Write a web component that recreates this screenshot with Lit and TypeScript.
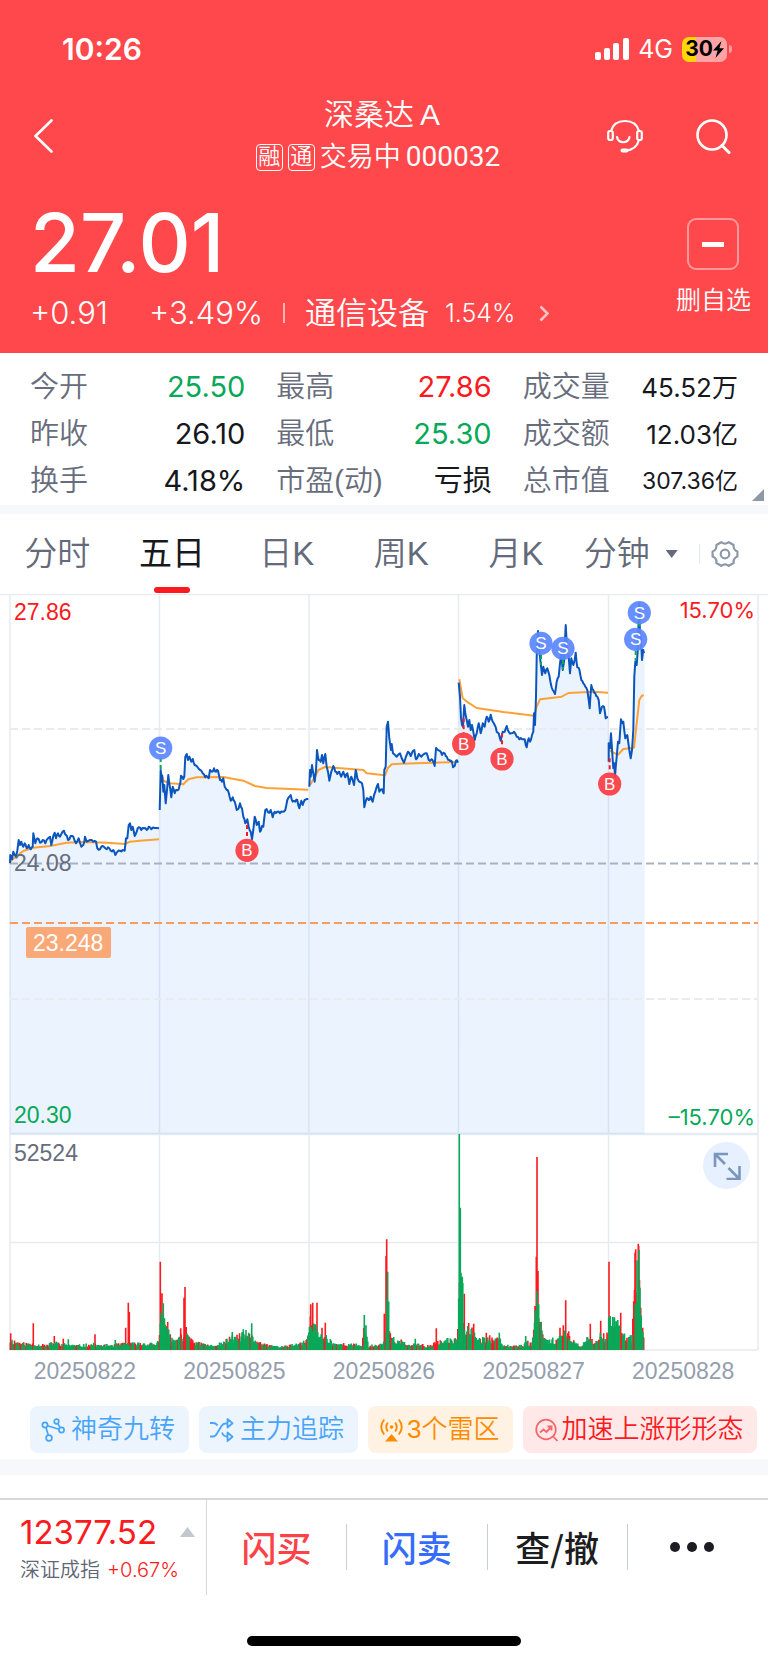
import { LitElement, html, svg, css } from "lit";
import { customElement, state } from "lit/decorators.js";

type Point = [number, number];

const UNIT = 3; // chart samples are stored in thirds of a pixel
const WIDTH = 768;
const PRICE_HEIGHT = 540;
const VOLUME_HEIGHT = 217;
const DAY_LINES = [10, 159.5, 309, 458.5, 608.5, 758];

const parse = (text: string, dx = 0): Point[] =>
  text
    .trim()
    .split(/\s+/)
    .map((pair) => {
      const [x, y] = pair.split(",").map(Number);
      return [x + dx, y] as Point;
    });

const random = (seed: number) => () => {
  seed = (seed * 1664525 + 1013904223) % 4294967296;
  return seed / 4294967296;
};

const PRICES: Point[][] = [
  parse(`30,820 31,795 36,808 40,785 44,795 48,800 52,782 56,750 60,765 64,755 70,770 74,760 80,775 86,765 92,778 98,770
    100,730 106,760 112,745 120,758 128,750 136,760 144,745 150,740 154,765 160,738 164,728 168,745 174,730 180,740
    186,728 192,722 198,735 204,750 212,738 220,740 228,760 236,745 244,770 250,765 255,740 260,755 270,750 280,755
    288,755 292,775 300,778 308,768 316,775 324,772 332,782 340,780 346,795 352,785 360,782 368,780 374,782 378,745
    382,745 386,705 390,700 394,720 398,710 404,738 410,725 416,712 424,720 432,715 440,720 446,710 454,718 464,714 477,715`),
  parse(`479,660 482,540 485,575 487,557 490,605 493,585 497,640 501,600 505,555 508,580 514,622 518,590 524,610 530,600
    536,598 541,580 543,557 550,567 553,560 556,500 560,492 564,510 568,500 574,515 578,507 584,525 592,530 600,540
    608,550 616,562 622,560 626,565 630,540 636,545 642,535 648,545 654,542 660,570 666,575 670,565 674,590 680,600
    686,608 692,632 698,622 704,635 710,660 716,655 720,640 726,655 730,680 736,700 742,688 746,710 752,725 756,748
    760,720 764,680 770,705 776,695 780,725 786,708 790,710 796,660 800,657 808,668 812,660 818,682 824,665 832,665
    840,670 848,665 856,660 862,630 866,622 872,615 878,635 886,635 892,630 898,655 904,632 908,645 914,630 925,627`),
  parse(`928,590 930,540 932,560 936,525 940,550 944,575 948,540 951,480 956,510 962,515 966,495 970,520 976,492 980,530
    984,545 988,572 994,545 1000,528 1006,545 1012,552 1018,545 1024,560 1030,545 1036,562 1042,550 1048,582 1054,560
    1062,585 1067,540 1072,565 1078,575 1086,580 1090,600 1093,652 1100,625 1106,630 1112,620 1118,635 1126,605
    1134,582 1138,605 1146,598 1151,610 1153,540 1157,530 1160,410 1164,395 1168,445 1173,480 1175,462 1179,490
    1190,500 1200,490 1212,518 1224,485 1232,498 1243,480 1248,508 1256,492 1264,500 1272,492 1280,490 1286,510
    1294,508 1300,515 1304,528 1308,474 1318,482 1326,495 1334,490 1340,500 1348,510 1354,512 1359,532 1364,528 1368,512 1374,518`),
  parse(`236,278 240,320 243,385 246,405 249,410 251,370 253,345 256,370 260,390 264,410 268,390 272,420 276,405 280,425
    284,450 290,430 296,400 302,430 308,400 314,410 320,380 326,395 332,374 338,395 344,405 350,425 356,430 362,452
    368,425 374,425 380,408 386,425 394,430 402,425 410,440 418,448 426,448 434,448 440,472 446,445 450,455 456,435
    460,425 462,370 465,405 468,320 470,200 474,123 478,180 482,220 486,255 490,230 496,250 502,235 508,255 512,280
    518,300 525,312 530,275 536,260 540,220 544,190 548,240 552,215 557,105 562,190 566,200 570,250 574,205 580,225
    584,210 587,188 592,232 598,238 604,270 610,280 616,290 622,300 626,330 629,355 634,285 640,300 646,310 652,320
    656,330 660,370 666,350 672,350 677,385 684,382`, 1140),
  parse(`686,515 686,460 690,475 693,430 697,490 700,535 703,520 705,560 710,500 714,455 718,460 720,430 723,388 728,400
    730,395 736,445 742,435 748,480 752,505 756,480 760,420 763,260 766,215 770,225 774,170 777,40 780,130 783,150
    786,210 790,180 792,190`, 1140),
];

const AVERAGES: Point[][] = [
  parse(`30,815 50,798 70,783 100,773 150,768 200,758 250,756 320,758 375,762 390,755 420,752 477,748`),
  parse(`482,545 490,572 510,580 550,583 565,568 590,562 670,561 730,572 765,588 800,594 925,599`),
  parse(`930,585 945,560 955,540 975,531 1090,540 1100,550 1155,556 1163,535 1175,523 1200,521 1372,516`),
  parse(`238,268 248,325 265,338 290,354 370,366 462,377 470,350 480,328 545,320 565,309 640,305 684,308`, 1140),
  parse(`688,480 700,488 714,494 730,477 762,473 770,400 778,330 785,318 791,315`, 1140),
];

const toLocal = ([x, y]: Point): Point => [x / UNIT, y / UNIT - 4];

// Adds the tick-by-tick flicker between the main turning points.
const flicker = (points: Point[], next: () => number): Point[] =>
  points.flatMap((p, i) => {
    const q = points[i + 1];
    if (!q || q[0] - p[0] < 5) return [p];
    return [p, [(p[0] + q[0]) / 2, (p[1] + q[1]) / 2 + (next() - 0.5) * 9] as Point];
  });

const linePath = (points: Point[]) =>
  "M" + points.map((p) => toLocal(p).map((n) => n.toFixed(1)).join(" ")).join("L");

interface Marker {
  kind: "S" | "B";
  x: number;
  y: number;
  from: number;
  to: number;
}

const MARKERS: Marker[] = [
  { kind: "S", x: 482, y: 474, from: 504, to: 540 },
  { kind: "B", x: 741, y: 781, from: 705, to: 745 },
  { kind: "B", x: 1391, y: 462, from: 385, to: 430 },
  { kind: "B", x: 1506, y: 507, from: 430, to: 470 },
  { kind: "S", x: 1623, y: 160, from: 195, to: 225 },
  { kind: "S", x: 1689, y: 175, from: 210, to: 240 },
  { kind: "B", x: 1829, y: 582, from: 505, to: 545 },
  { kind: "S", x: 1907, y: 148, from: 183, to: 213 },
  { kind: "S", x: 1918, y: 68, from: 98, to: 112 },
];

// Typical bar height along the time axis.
const ENVELOPE: Point[] = [
  ...parse(`30,36 60,22 100,20 140,15 160,26 190,20 230,15 280,20 300,15 350,18 385,22 420,22 470,22 478,40 484,110 495,95
    510,50 530,28 545,45 560,70 570,45 590,24 640,14 670,24 690,40 740,52 760,40 790,18 840,11 900,20 920,30 930,100
    945,75 965,45 980,45 1000,22 1060,18 1086,18 1092,70 1099,60 1105,14 1150,20 1158,80 1162,200 1170,70 1185,25`),
  ...parse(`65,30 80,18 110,18 150,14 170,25 200,32 232,40 237,300 243,240 248,210 255,80 262,80 280,84 292,38 320,36 360,34 370,14
    430,16 440,30 455,18 465,100 471,250 478,130 488,60 500,35 530,34 555,55 580,28 600,14 625,42 645,24 680,54 690,130
    710,100 725,55 745,36 756,44 762,190 770,240 776,290 782,120 790,50 793,20`, 1140),
];

const RISE = parse(`32,642 100,612 163,650 190,658 285,645 377,625 385,550 388,578 481,427 486,522 503,608 542,627 552,535
  555,503 932,555 938,550 951,550 966,625 976,610 1153,583 1158,410 1160,360 1309,627 1393,523 1459,640 1469,648 1605,560 1609,412
  1611,113 1614,455 1680,625 1690,618 1697,543 1706,636 1771,613 1802,604 1827,427 1862,580 1905,400 1907,390 1915,373
  1922,565 1928,625`);
const FALL = parse(`205,660 346,662 490,552 755,612 730,630 738,632 697,638 1093,587 1098,618 1163,457 1378,42 1381,265
  1383,460 1387,472 1246,658 1498,640 1577,650 1616,555 1801,640 1917,392 1920,505`);

const envelopeAt = (x: number) => {
  const i = ENVELOPE.findIndex((p) => p[0] >= x);
  if (i <= 0) return ENVELOPE[0][1];
  const [a, b] = [ENVELOPE[i - 1], ENVELOPE[i]];
  return a[1] + ((b[1] - a[1]) * (x - a[0])) / (b[0] - a[0] || 1);
};

const bar = (x: number, height: number) =>
  `M${(x / UNIT).toFixed(1)} ${VOLUME_HEIGHT - 1}v${(-height / UNIT).toFixed(1)}`;

const buildVolume = () => {
  const next = random(11);
  let up = "";
  let down = "";
  for (let x = 31; x < 1933; x += 2.5) {
    const height = Math.max(7, envelopeAt(x) * (0.5 + next() * 0.6));
    if (next() < 0.42) up += bar(x, height);
    else down += bar(x, height);
  }
  for (const [x, y] of RISE) up += bar(x, 692 - y);
  const peaks = FALL.map(([x, y]) => bar(x, 692 - y)).join("");
  return { up, down: down + peaks };
};

const VOLUME = buildVolume();
const jitter = random(5);
const PRICE_LINES = PRICES.map((session) => flicker(session, jitter));

@customElement("stock-header")
export class StockHeader extends LitElement {
  static styles = css`
    :host {
      display: block;
      background: #ff484b;
      color: #fff;
    }
    button,
    a {
      font: inherit;
      color: inherit;
      background: none;
      border: 0;
      padding: 0;
      text-decoration: none;
      cursor: pointer;
    }
    svg {
      display: block;
    }
    .status {
      box-sizing: border-box;
      display: flex;
      justify-content: space-between;
      align-items: center;
      height: 94px;
      padding: 4px 36px 0 62px;
      font-family: Inter, "Liberation Sans", sans-serif;
    }
    .time {
      font-size: 30px;
      font-weight: 600;
    }
    .signals {
      display: flex;
      align-items: center;
      gap: 9px;
    }
    .network {
      font-size: 25px;
      font-weight: 400;
    }
    .battery {
      display: flex;
      align-items: center;
      gap: 2px;
    }
    .level {
      display: flex;
      align-items: center;
      justify-content: center;
      width: 45px;
      height: 25px;
      border-radius: 7px;
      background: linear-gradient(90deg, #ffd60a 30%, #ffa4a5 30%);
      color: #000;
      font-size: 21px;
      font-weight: 700;
    }
    .tip {
      width: 3px;
      height: 8px;
      border-radius: 0 4px 4px 0;
      background: #ff9a9c;
    }
    .nav {
      display: grid;
      grid-template-columns: 1fr auto 1fr;
      align-items: center;
      height: 84px;
      padding: 0 37px 0 33px;
    }
    .title {
      text-align: center;
    }
    h1 {
      display: flex;
      justify-content: center;
      gap: 6px;
      margin: 0;
      font-size: 30px;
      line-height: 42px;
      font-weight: inherit;
    }
    .code {
      display: flex;
      align-items: center;
      justify-content: center;
      gap: 5px;
      font-size: 27px;
      line-height: 42px;
      padding-right: 8px;
    }
    .tag {
      box-sizing: border-box;
      width: 27px;
      height: 27px;
      border: 1px solid #fff;
      border-radius: 4px;
      font-size: 22px;
      line-height: 24px;
      text-align: center;
    }
    .digits {
      font-family: Roboto, "Liberation Sans", sans-serif;
      font-size: 28px;
      font-weight: 400;
    }
    .tools {
      display: flex;
      justify-content: flex-end;
      gap: 53px;
    }
    .quote {
      display: flex;
      justify-content: space-between;
      padding: 23px 17px 12px 30px;
    }
    .price {
      font-family: Inter, "Liberation Sans", sans-serif;
      font-size: 81px;
      line-height: 84px;
      font-weight: 500;
    }
    .change {
      display: flex;
      align-items: center;
      height: 56px;
      font-family: Inter, "Noto Sans CJK SC", sans-serif;
      font-size: 31px;
    }
    .change .percent {
      margin-left: 41px;
    }
    .rule {
      width: 2px;
      height: 20px;
      margin: 0 20px;
      background: #ffb3b4;
    }
    .sector {
      display: flex;
      align-items: center;
    }
    .small {
      font-size: 25px;
      margin: 0 24px 0 16px;
    }
    .watch {
      display: flex;
      flex-direction: column;
      align-items: center;
      gap: 10px;
      align-self: flex-start;
      padding-top: 17px;
      font-size: 25px;
      line-height: 40px;
    }
    .box {
      box-sizing: border-box;
      display: grid;
      place-items: center;
      width: 52px;
      height: 52px;
      border: 2px solid #ff9a9c;
      border-radius: 9px;
    }
    .minus {
      width: 22px;
      height: 5px;
      background: #fff;
    }
  `;

  render() {
    return html`
      <div class="status">
        <span class="time">10:26</span>
        <div class="signals">
          <svg width="34" height="22" viewBox="0 0 34 22" fill="#fff" aria-hidden="true">
            <rect x="0" y="14" width="6" height="8" rx="2" />
            <rect x="9" y="10" width="6" height="12" rx="2" />
            <rect x="18" y="5" width="6" height="17" rx="2" />
            <rect x="28" y="0" width="6" height="22" rx="2" />
          </svg>
          <span class="network">4G</span>
          <div class="battery">
            <span class="level"
              >30<svg width="11" height="17" viewBox="0 0 11 17" aria-hidden="true">
                <path d="M8.5 0 0 9.6h4.6L2.5 17 11 7.200H6.400Z" /></svg
            ></span>
            <span class="tip"></span>
          </div>
        </div>
      </div>
      <nav class="nav">
        <button aria-label="返回">
          <svg width="20" height="34" viewBox="0 0 20 34" fill="none" stroke="#fff" stroke-width="2.6">
            <path d="M18.500 1.500 2.500 17l16 15.500" stroke-linecap="round" stroke-linejoin="round" />
          </svg>
        </button>
        <div class="title">
          <h1><span>深桑达</span><span>A</span></h1>
          <div class="code">
            <span class="tag">融</span><span class="tag">通</span><span>交易中</span
            ><span class="digits">000032</span>
          </div>
        </div>
        <div class="tools">
          <button aria-label="客服">
            <svg width="36" height="34" viewBox="0 0 36 34" fill="none" stroke="#fff" stroke-width="2.2">
              <path d="M4 12C6 5 11.500 2 18 2s12 3 14 10M32 21c-2 7-6 10-13 10.500" />
              <rect x="1.200" y="12" width="4.600" height="9" rx="2" />
              <rect x="30.200" y="12" width="4.600" height="9" rx="2" />
              <path d="M10 18c1.500 7 11 7 12.500 0" stroke-linecap="round" />
              <path d="M15.500 31.500h4" stroke-width="4" stroke-linecap="round" />
            </svg>
          </button>
          <button aria-label="搜索">
            <svg width="35" height="35" viewBox="0 0 35 35" fill="none" stroke="#fff" stroke-width="2.600">
              <circle cx="16" cy="16" r="14.500" />
              <path d="m26 26.500 7 7" stroke-linecap="round" stroke-width="3" />
            </svg>
          </button>
        </div>
      </nav>
      <div class="quote">
        <div>
          <div class="price">27.01</div>
          <div class="change">
            <span>+0.91</span><span class="percent">+3.49%</span><span class="rule"></span>
            <a class="sector" href="#sector"
              >通信设备<span class="small">1.54%</span>
              <svg width="10" height="17" viewBox="0 0 10 17" fill="none" stroke="#ffc4c5" stroke-width="2.500">
                <path d="m1.500 1.500 7 7-7 7" /></svg
            ></a>
          </div>
        </div>
        <button class="watch"><span class="box"><span class="minus"></span></span>删自选</button>
      </div>
    `;
  }
}

@customElement("stock-facts")
export class StockFacts extends LitElement {
  static styles = css`
    :host {
      display: block;
      position: relative;
      border-bottom: 9px solid #f6f8fb;
    }
    dl {
      display: grid;
      grid-template-columns: repeat(3, 1fr);
      column-gap: 31px;
      margin: 0;
      padding: 11px 30px 0;
    }
    .fact {
      display: flex;
      justify-content: space-between;
      align-items: center;
      height: 47px;
      white-space: nowrap;
    }
    dt {
      font-size: 29px;
      color: #676d7c;
    }
    dd {
      margin: 0;
      font-family: Inter, "Noto Sans CJK SC", sans-serif;
      font-size: 29px;
      font-weight: 400;
      color: #16181c;
    }
    .mid {
      font-size: 26px;
    }
    .tiny {
      font-size: 23px;
    }
    .up {
      color: #fb1a20;
    }
    .down {
      color: #08a859;
    }
    .more {
      position: absolute;
      right: 4px;
      bottom: 4px;
      width: 12px;
      height: 12px;
      background: #8f98a8;
      clip-path: polygon(100% 0, 100% 100%, 0 100%);
    }
  `;

  private facts = [
    ["今开", "25.50", "down"],
    ["最高", "27.86", "up"],
    ["成交量", "45.52万", "mid"],
    ["昨收", "26.10", ""],
    ["最低", "25.30", "down"],
    ["成交额", "12.03亿", "mid"],
    ["换手", "4.18%", ""],
    ["市盈(动)", "亏损", ""],
    ["总市值", "307.36亿", "tiny"],
  ];

  render() {
    return html`
      <dl>
        ${this.facts.map(
          ([name, value, tone]) =>
            html`<div class="fact">
              <dt>${name}</dt>
              <dd class=${tone}>${value}</dd>
            </div>`
        )}
      </dl>
      <span class="more"></span>
    `;
  }
}

@customElement("period-tabs")
export class PeriodTabs extends LitElement {
  static styles = css`
    :host {
      display: flex;
      align-items: stretch;
      height: 80px;
    }
    button {
      font: inherit;
      font-size: 33px;
      color: #646a79;
      background: none;
      border: 0;
      padding: 0;
      cursor: pointer;
    }
    .tab {
      position: relative;
      flex: 1 1 0;
      display: flex;
      align-items: center;
      justify-content: center;
      gap: 16px;
      white-space: nowrap;
    }
    .active {
      color: #16181c;
      font-weight: 400;
    }
    .active::after {
      content: "";
      position: absolute;
      left: 50%;
      bottom: 1px;
      width: 36px;
      height: 6px;
      margin-left: -18px;
      border-radius: 3px;
      background: #fb1a20;
    }
    .caret {
      width: 12px;
      height: 8px;
      background: #646a79;
      clip-path: polygon(0 0, 100% 0, 50% 100%);
    }
    .settings {
      display: flex;
      align-items: center;
      width: 80px;
    }
    .settings::before {
      content: "";
      width: 1px;
      height: 20px;
      margin: 0 11px;
      background: #e4e9f1;
    }
  `;

  @state() private active = "五日";

  render() {
    return html`
      ${["分时", "五日", "日K", "周K", "月K", "分钟"].map(
        (name) => html`<button
          class="tab ${name === this.active ? "active" : ""}"
          @click=${() => (this.active = name)}
        >
          ${name}${name === "分钟" ? html`<span class="caret"></span>` : null}
        </button>`
      )}
      <button class="settings" aria-label="设置">
        <svg width="28" height="28" viewBox="0 0 28 28" fill="none" stroke="#8d98a8" stroke-width="2.200">
          <path
            d="M10.200 2.200q3.800 3 7.600 0l4.800 2.800q-.6 4.800 3.800 6.500v5q-4.400 1.700-3.800 6.500l-4.800 2.800q-3.800-3-7.600 0L5.400 23q.6-4.800-3.800-6.500v-5Q6 9.800 5.400 5Z"
            stroke-linejoin="round"
          />
          <circle cx="14" cy="14" r="4.300" />
        </svg>
      </button>
    `;
  }
}

@customElement("stock-chart")
export class StockChart extends LitElement {
  static styles = css`
    :host {
      display: block;
    }
    svg {
      display: block;
      width: 100%;
    }
    .grid {
      fill: none;
      stroke: #e6ebf2;
      stroke-width: 1.5;
    }
    .dash {
      stroke: #e8ebef;
      stroke-width: 2;
      stroke-dasharray: 8 4;
    }
    .base {
      stroke: #a9b1bf;
    }
    .cost {
      stroke: #fb9a60;
    }
    .area {
      fill: #3a8cff;
      fill-opacity: 0.1;
    }
    .price {
      fill: none;
      stroke: #0a56bd;
      stroke-width: 2;
      stroke-linejoin: round;
    }
    .average {
      fill: none;
      stroke: #fca135;
      stroke-width: 2;
      stroke-linejoin: round;
    }
    text {
      font-size: 23px;
      fill: #676d7c;
    }
    .up {
      fill: #fb1a20;
    }
    .down {
      fill: #08a859;
    }
    .end {
      font-family: Inter, "Liberation Sans", sans-serif;
      font-size: 22px;
      font-weight: 400;
      text-anchor: end;
    }
    .tag {
      fill: #f9a878;
    }
    .tagText {
      fill: #fff;
    }
    .mark {
      fill: #fff;
      font-size: 17px;
      text-anchor: middle;
    }
    .sell {
      fill: #5b86ff;
      fill-opacity: 0.93;
    }
    .buy {
      fill: #fb3f46;
      fill-opacity: 0.95;
    }
    .stem {
      stroke-width: 2;
      stroke-dasharray: 4 3;
    }
    .stemS {
      stroke: #08a859;
    }
    .stemB {
      stroke: #fb1a20;
    }
    .barUp {
      stroke: #fb1a20;
      stroke-width: 1.6;
    }
    .barDown {
      stroke: #08a859;
      stroke-width: 1.6;
    }
    .volume {
      position: relative;
    }
    .expand {
      position: absolute;
      top: 8px;
      right: 18px;
      display: grid;
      place-items: center;
      width: 47px;
      height: 47px;
      padding: 0;
      border: 0;
      border-radius: 50%;
      background: #e6f0fe;
      cursor: pointer;
    }
    .expand svg {
      width: 28px;
    }
    .dates {
      display: grid;
      grid-template-columns: repeat(5, 1fr);
      padding: 0 10px;
      font-size: 23px;
      line-height: 40px;
      color: #949eae;
      text-align: center;
    }
  `;

  private renderMarker(m: Marker) {
    const [x, y] = toLocal([m.x, m.y]);
    const from = toLocal([0, m.from])[1];
    const to = toLocal([0, m.to])[1];
    return svg`
      <line class="stem stem${m.kind}" x1=${x} x2=${x} y1=${from} y2=${to} />
      <circle class=${m.kind === "S" ? "sell" : "buy"} cx=${x} cy=${y} r="11.600" />
      <text class="mark" x=${x} y=${y + 6}>${m.kind}</text>`;
  }

  render() {
    const [left, right] = [DAY_LINES[0], DAY_LINES[5]];
    return html`
      <svg viewBox="0 0 ${WIDTH} ${PRICE_HEIGHT}" role="img" aria-label="五日走势">
        <path class="grid" d="M0 .5H${WIDTH}M${left} ${PRICE_HEIGHT - 0.5}H${right}" />
        ${DAY_LINES.map((x) => svg`<path class="grid" d="M${x} 0V${PRICE_HEIGHT}" />`)}
        ${PRICE_LINES.map((points) => {
          const first = toLocal(points[0])[0];
          const last = toLocal(points[points.length - 1])[0] + 0.6;
          return svg`<path class="area" d="${linePath(points)}H${last}V${PRICE_HEIGHT}H${first}Z" />`;
        })}
        ${[135, 405].map((y) => svg`<line class="dash" x1=${left} x2=${right} y1=${y} y2=${y} />`)}
        <line class="dash base" x1=${left} x2=${right} y1="269.500" y2="269.500" />
        <line class="dash cost" x1=${left} x2=${right} y1="329" y2="329" />
        ${AVERAGES.map((points) => svg`<path class="average" d=${linePath(points)} />`)}
        ${PRICE_LINES.map((points) => svg`<path class="price" d=${linePath(points)} />`)}
        ${MARKERS.map((m) => this.renderMarker(m))}
        <text class="up" x="14" y="26">27.86</text>
        <text class="up end" x="755" y="24">15.70%</text>
        <text x="14" y="277">24.08</text>
        <rect class="tag" x="26" y="333" width="85" height="31" rx="2" />
        <text class="tagText" x="33" y="357">23.248</text>
        <text class="down" x="14" y="529">20.30</text>
        <text class="down end" x="755" y="531">–15.70%</text>
      </svg>
      <div class="volume">
        <svg viewBox="0 0 ${WIDTH} ${VOLUME_HEIGHT}" role="img" aria-label="成交量">
          ${DAY_LINES.map((x) => svg`<path class="grid" d="M${x} 0V${VOLUME_HEIGHT - 1}" />`)}
          <path class="grid" d="M${left} .5H${right}M${left} 108.500H${right}M${left} 216H${right}" />
          <path class="barUp" d=${VOLUME.up} />
          <path class="barDown" d=${VOLUME.down} />
          <text x="14" y="27">52524</text>
        </svg>
        <button class="expand" aria-label="全屏">
          <svg viewBox="0 0 28 28" fill="none" stroke="#7a96bd" stroke-width="2.600" aria-hidden="true">
            <path d="M2 15V2h13M2.500 2.500 12 12M15.500 16l10 10M26.500 14v13h-13" />
          </svg>
        </button>
      </div>
      <div class="dates">
        ${["20250822", "20250825", "20250826", "20250827", "20250828"].map((d) => html`<span>${d}</span>`)}
      </div>
    `;
  }
}

@customElement("insight-chips")
export class InsightChips extends LitElement {
  static styles = css`
    :host {
      display: flex;
      gap: 10px;
      padding: 15px 12px 6px 30px;
      border-bottom: 16px solid #f6f8fb;
    }
    .chip {
      display: flex;
      align-items: center;
      justify-content: center;
      gap: 6px;
      height: 47px;
      padding: 0 14px 0 11px;
      border-radius: 8px;
      font-size: 26px;
      white-space: nowrap;
      text-decoration: none;
    }
    .tight {
      gap: 4px;
      padding: 0 13px 0 12px;
    }
    .blue {
      color: #48a4f8;
      background: #ecf5fe;
    }
    .orange {
      color: #ff8c00;
      background: #fff2e2;
    }
    .red {
      color: #fb1a20;
      background: #fee8e8;
    }
  `;

  render() {
    return html`
      <a class="chip blue" href="#nine">
        <svg width="24" height="24" viewBox="0 0 24 24" fill="none" stroke="currentColor" stroke-width="1.700">
          <circle cx="4" cy="7" r="2.600" />
          <circle cx="15.500" cy="3.500" r="2.300" />
          <circle cx="20.500" cy="12" r="2.600" />
          <circle cx="8" cy="20" r="2.900" />
          <path d="M5 9.400 7.200 17M6.500 7.800l11.500 3.500M16.800 5.600l2.400 4" />
        </svg>
        神奇九转
      </a>
      <a class="chip blue" href="#flow">
        <svg width="24" height="24" viewBox="0 0 24 24" fill="none" stroke="currentColor" stroke-width="1.800">
          <path d="M0 5h3q3 0 4.500 2.500M0 18.500h3q2.500 0 4-3L11.500 8Q13 5.500 15.500 5.500H17M12 14.500q1.500 4 5 4" />
          <path d="M17.500 1v8.500L22.500 5.300ZM17.500 14.500V23l5-4.200Z" stroke-linejoin="round" />
        </svg>
        主力追踪
      </a>
      <a class="chip orange tight" href="#risk">
        <svg width="23" height="24" viewBox="0 0 23 24" fill="none" stroke="currentColor" stroke-width="1.900">
          <circle cx="11.500" cy="9" r="1.800" fill="currentColor" stroke="none" />
          <path d="M7.800 4.500q-3 4.500 0 9M15.200 4.500q3 4.500 0 9M4.200 1.500q-6 7.500 0 15M18.800 1.500q6 7.500 0 15" />
          <path d="m11.500 16 6.500 7.500H5Z" fill="currentColor" stroke="none" />
        </svg>
        3个雷区
      </a>
      <a class="chip red tight" href="#shape">
        <svg width="23" height="24" viewBox="0 0 23 24" fill="none" stroke="#f7666b" stroke-width="1.700">
          <circle cx="11" cy="11.500" r="9.800" />
          <path d="m18 18.500 4.500 4.500" />
          <path d="m5 14.500 3.500-3 3 2.500 4.500-5M12.500 8.500h4v4" stroke-width="1.900" />
        </svg>
        加速上涨形形态
      </a>
    `;
  }
}

@customElement("trade-bar")
export class TradeBar extends LitElement {
  static styles = css`
    :host {
      display: block;
      margin-top: 23px;
      border-top: 2px solid #d4d7dc;
    }
    .bar {
      display: grid;
      grid-template-columns: 207px repeat(4, 1fr);
      height: 95px;
    }
    .index {
      display: grid;
      grid-template-columns: 1fr auto;
      align-content: start;
      padding: 13px 11px 0 20px;
      border-right: 1px solid #d4d7dc;
      font-family: Inter, "Noto Sans CJK SC", sans-serif;
      color: #fb1a20;
      text-decoration: none;
    }
    .points {
      font-size: 33px;
      font-weight: 400;
      line-height: 38px;
    }
    .arrow {
      align-self: center;
      width: 15px;
      height: 10px;
      background: #c3c7cf;
      clip-path: polygon(50% 0, 100% 100%, 0 100%);
    }
    .name {
      grid-column: 1 / -1;
      display: flex;
      gap: 7px;
      font-size: 20px;
      line-height: 38px;
      white-space: nowrap;
    }
    .label {
      color: #5f6676;
    }
    .action {
      display: flex;
      align-items: center;
      justify-content: center;
      gap: 7px;
      height: 46px;
      margin: 24px 0;
      padding: 0;
      border: 0;
      border-right: 1px solid #c9cdd5;
      background: none;
      font-family: "Noto Sans CJK SC", sans-serif;
      font-size: 35px;
      font-weight: 500;
      line-height: 46px;
      color: #1c1d20;
      cursor: pointer;
    }
    .action:last-child {
      padding-right: 12px;
      border-right: 0;
    }
    .action.buy {
      color: #fd4247;
    }
    .action.sell {
      color: #356cfb;
    }
    .dot {
      width: 10px;
      height: 10px;
      border-radius: 50%;
      background: #1c1d20;
    }
    .home {
      width: 274px;
      height: 10px;
      margin: 41px auto 17px;
      border-radius: 5px;
      background: #000;
    }
  `;

  render() {
    return html`
      <div class="bar">
        <a class="index" href="#index">
          <span class="points">12377.52</span><span class="arrow"></span>
          <span class="name"><span class="label">深证成指</span><span>+0.67%</span></span>
        </a>
        <button class="action buy">闪买</button>
        <button class="action sell">闪卖</button>
        <button class="action">查/撤</button>
        <button class="action" aria-label="更多">
          <span class="dot"></span><span class="dot"></span><span class="dot"></span>
        </button>
      </div>
      <div class="home"></div>
    `;
  }
}

@customElement("app-root")
export class AppRoot extends LitElement {
  static styles = css`
    :host {
      display: block;
      background: #fff;
      font-family: "Liberation Sans", "Noto Sans CJK SC", sans-serif;
      font-weight: 350;
      line-height: 1.2;
    }
  `;

  render() {
    return html`
      <stock-header></stock-header>
      <stock-facts></stock-facts>
      <period-tabs></period-tabs>
      <stock-chart></stock-chart>
      <insight-chips></insight-chips>
      <trade-bar></trade-bar>
    `;
  }
}
